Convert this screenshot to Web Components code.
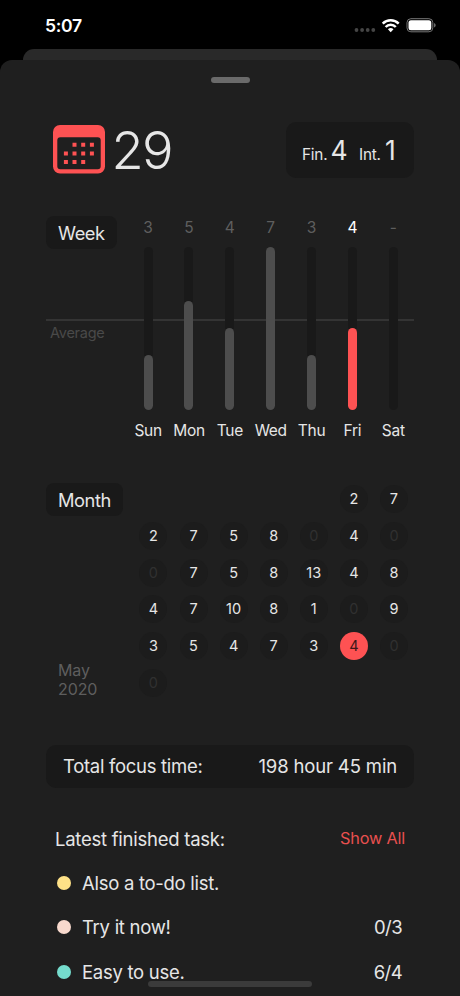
<!DOCTYPE html>
<html lang="en">
<head>
<meta charset="utf-8">
<title>Focus statistics</title>
<style>
	html, body {
		margin: 0;
		height: 996px;
		overflow: hidden;
		background: #000;
	}
	body {
		--accent: #fe5253;
		--sheet: #1f1f1f;
		--inset: #191919;
		--text: #e6e6e6;
		--dim: #5e5e5e;
		color: var(--text);
		font-family: Inter, "Liberation Sans", sans-serif;
	}
</style>
</head>
<body>
<stats-screen></stats-screen>
<script>
(function()  {
	function define(name, html, setup) {
		let template = document.createElement("template");
		template.innerHTML = html;
		customElements.define(name, class extends HTMLElement {
			constructor() {
				super();
				this._shadowRoot = this.attachShadow({mode: "open"});
				this._shadowRoot.appendChild(template.content.cloneNode(true));
			}

			connectedCallback() {
				if (setup && !this._ready) {
					this._ready = true;
					setup(this, this._shadowRoot);
				}
			}
		});
	}

	define("status-bar", `
		<style>
		:host {
			display: flex;
			height: 49px;
			box-sizing: border-box;
			padding: 14px 24px 0 45px;
			justify-content: space-between;
			color: #fff;
		}
		.time {
			font-size: 17.6px;
			line-height: 24px;
			font-weight: 600;
			letter-spacing: -0.35px;
		}
		svg {
			display: block;
			width: 84px;
			height: 24px;
		}
		</style>
		<span class="time"><slot></slot></span>
		<svg viewBox="352 14 84 24" fill="#fff">
			<g fill="#454545">
				<circle cx="356.5" cy="30" r="1.9"/>
				<circle cx="362.1" cy="30" r="1.9"/>
				<circle cx="367.7" cy="30" r="1.9"/>
				<circle cx="373.3" cy="30" r="1.9"/>
			</g>
			<g fill="none" stroke="#fff" stroke-width="2.5">
				<path d="M382.7 23.6a11.4 11.4 0 0 1 16 0"/>
				<path d="M385.6 27a7.1 7.1 0 0 1 10.2 0"/>
			</g>
			<path d="M390.7 32.2l-2.8-2.9a4 4 0 0 1 5.6 0z"/>
			<rect x="407" y="18.7" width="25.8" height="13.1" rx="3.9" fill="none" stroke="#777" stroke-width="1"/>
			<rect x="408.5" y="20.2" width="22.8" height="10.1" rx="2.5"/>
			<path d="M434.1 23.1c2 .8 2 3.5 0 4.3z" fill="#777"/>
		</svg>
	`);

	define("modal-sheet", `
		<style>
		:host {
			display: block;
		}
		.behind {
			height: 11px;
			margin: 0 23px;
			border-radius: 11px 11px 0 0;
			background: #292929;
		}
		.sheet {
			display: flex;
			flex-direction: column;
			height: 936px;
			box-sizing: border-box;
			padding: 17px 46px 0;
			border-radius: 12px 12px 0 0;
			background: var(--sheet);
		}
		.grabber {
			align-self: center;
			width: 39px;
			height: 5.5px;
			flex: none;
			border-radius: 3px;
			background: #6a6a6a;
		}
		</style>
		<div class="behind"></div>
		<div class="sheet">
			<div class="grabber"></div>
			<slot></slot>
		</div>
	`);

	define("calendar-icon", `
		<style>
		:host {
			display: block;
			width: 52px;
			height: 49px;
		}
		svg {
			display: block;
		}
		</style>
		<svg width="52" height="49" viewBox="0 0 52 49" fill="var(--accent)">
			<path fill-rule="evenodd" d="M7 0h38a7 7 0 0 1 7 7v34.5a7 7 0 0 1-7 7H7a7 7 0 0 1-7-7V7a7 7 0 0 1 7-7zM7.3 12.3a3 3 0 0 0-3 3v26a3 3 0 0 0 3 3h37.4a3 3 0 0 0 3-3v-26a3 3 0 0 0-3-3z"/>
			<path d="M19.5 17.7h4v4h-4zM28.2 17.7h4v4h-4zM36.9 17.7h4v4h-4zM10.9 26.4h4v4h-4zM19.5 26.4h4v4h-4zM28.2 26.4h4v4h-4zM36.9 26.4h4v4h-4zM10.9 35h4v4h-4zM19.5 35h4v4h-4zM28.2 35h4v4h-4z"/>
		</svg>
	`);

	define("day-header", `
		<style>
		:host {
			display: flex;
			justify-content: space-between;
			height: 56px;
		}
		.date {
			display: flex;
			align-items: flex-start;
			padding: 3px 0 0 7px;
		}
		.day {
			margin: -6px 0 0 6.5px;
			font-size: 52.5px;
			line-height: 62px;
			font-weight: 275;
			letter-spacing: -1.7px;
		}
		.totals {
			display: flex;
			align-items: baseline;
			width: 128px;
			box-sizing: border-box;
			padding: 10px 0 0 16px;
			border-radius: 10px;
			background: var(--inset);
			font-size: 15.3px;
			line-height: 36px;
			letter-spacing: -0.2px;
			white-space: pre;
		}
		b {
			font-size: 26.5px;
			font-weight: 400;
		}
		.fin { width: 28.5px; }
		.finished { width: 28.5px; }
		.int { width: 26px; }
		</style>
		<div class="date">
			<calendar-icon></calendar-icon>
			<span class="day"><slot name="day"></slot></span>
		</div>
		<div class="totals">
			<span class="fin">Fin.</span>
			<b class="finished"><slot name="finished"></slot></b>
			<span class="int">Int.</span>
			<b><slot name="interrupted"></slot></b>
		</div>
	`);

	define("section-chip", `
		<style>
		:host {
			display: block;
			width: max-content;
			height: 33px;
			padding: 0 12px;
			border-radius: 8px;
			background: var(--inset);
			font-size: 18.3px;
			line-height: 34px;
			letter-spacing: -0.45px;
		}
		</style>
		<slot></slot>
	`);

	define("week-bar", `
		<style>
		:host {
			display: flex;
			flex-direction: column;
			align-items: center;
			color: var(--text);
			font-size: 15.5px;
		}
		.count {
			height: 31px;
			line-height: 23px;
			color: var(--dim);
		}
		.track {
			display: flex;
			align-items: flex-end;
			width: 9px;
			height: 163px;
			border-radius: 4.5px;
			background: var(--inset);
		}
		.fill {
			width: 9px;
			border-radius: 4.5px;
			background: #4d4d4d;
		}
		.name {
			padding-top: 10px;
			line-height: 22px;
			letter-spacing: -0.3px;
		}
		:host([today]) .count { color: #fff; }
		:host([today]) .fill { background: var(--accent); }
		</style>
		<span class="count"></span>
		<div class="track"><div class="fill"></div></div>
		<span class="name"><slot></slot></span>
	`, function(host, root) {
		let count = Number(host.getAttribute("count"));
		let max = Number(host.getAttribute("max"));
		root.querySelector(".count").textContent = count || "-";
		// the scale starts at 1, not at 0
		root.querySelector(".fill").style.height = Math.max(0, (count - 1) / (max - 1)) * 100 + "%";
	});

	define("week-chart", `
		<style>
		:host {
			display: block;
			position: relative;
			height: 226px;
		}
		.average {
			position: absolute;
			top: 103px;
			left: 0;
			right: 0;
			border-top: 2px solid #343434;
			color: #494949;
			font-size: 14.5px;
			line-height: 18px;
			letter-spacing: -0.25px;
			padding: 3px 0 0 4px;
		}
		.row {
			position: relative;
			display: grid;
			grid-template-columns: 81.7px 1fr;
		}
		.bars {
			display: grid;
			grid-template-columns: repeat(7, 1fr);
			margin-right: 0.3px;
		}
		</style>
		<div class="average">Average</div>
		<div class="row">
			<section-chip>Week</section-chip>
			<div class="bars"></div>
		</div>
	`, function(host, root) {
		let days = ["Sun", "Mon", "Tue", "Wed", "Thu", "Fri", "Sat"];
		let counts = host.getAttribute("counts").split(",").map(Number);
		let max = Math.max(...counts);
		root.querySelector(".bars").innerHTML = days.map((day, i) =>
			`<week-bar count="${counts[i]}" max="${max}"${i == host.getAttribute("today") ? " today" : ""}>${day}</week-bar>`
		).join("");
	});

	define("month-grid", `
		<style>
		:host {
			display: grid;
			grid-template-columns: 87.4px 1fr;
			height: 221px;
		}
		.side {
			display: flex;
			flex-direction: column;
			justify-content: space-between;
		}
		section-chip {
			margin-top: -1px;
		}
		.label {
			padding: 0 0 5px 12px;
			width: 44px;
			color: var(--dim);
			font-size: 16px;
			line-height: 19.5px;
			letter-spacing: -0.1px;
		}
		.cells {
			display: grid;
			grid-template-columns: repeat(7, 1fr);
			grid-auto-rows: 36.7px;
			justify-items: center;
		}
		.cell {
			width: 28px;
			height: 28px;
			margin-top: 1.8px;
			border-radius: 50%;
			background: #1c1c1c;
			font-size: 14.5px;
			line-height: 28px;
			text-align: center;
		}
		.zero { color: #303030; }
		.today {
			background: var(--accent);
			color: #3f1718;
		}
		</style>
		<div class="side">
			<section-chip>Month</section-chip>
			<div class="label"><slot></slot></div>
		</div>
		<div class="cells"></div>
	`, function(host, root) {
		let cells = root.querySelector(".cells");
		host.getAttribute("counts").split(",").forEach((count, i) => {
			let cell = document.createElement("div");
			cell.className = "cell" + (count == 0 ? " zero" : "") + (i + 1 == host.getAttribute("today") ? " today" : "");
			cell.textContent = count;
			if (i == 0) {
				cell.style.gridColumnStart = host.getAttribute("start");
			}
			cells.appendChild(cell);
		});
	});

	define("focus-total", `
		<style>
		:host {
			display: flex;
			justify-content: space-between;
			height: 43px;
			padding: 0 17px;
			border-radius: 10px;
			background: var(--inset);
			font-size: 18.5px;
			line-height: 43px;
			letter-spacing: -0.3px;
		}
		.value {
			letter-spacing: -0.15px;
		}
		</style>
		<span>Total focus time:</span>
		<span class="value"><slot></slot></span>
	`);

	define("task-item", `
		<style>
		:host {
			display: flex;
			align-items: center;
			height: 44.4px;
			font-size: 18.5px;
			letter-spacing: -0.28px;
		}
		.dot {
			width: 14px;
			height: 14px;
			margin-right: 11px;
			border-radius: 50%;
		}
		.progress {
			margin-left: auto;
			letter-spacing: -0.6px;
		}
		</style>
		<span class="dot"></span>
		<span><slot></slot></span>
		<span class="progress"></span>
	`, function(host, root) {
		root.querySelector(".dot").style.background = host.getAttribute("color");
		root.querySelector(".progress").textContent = host.getAttribute("progress") || "";
	});

	define("task-list", `
		<style>
		:host {
			display: block;
			padding: 0 9px;
		}
		.head {
			display: flex;
			justify-content: space-between;
			height: 44.2px;
			font-size: 18.5px;
			line-height: 44px;
			letter-spacing: -0.25px;
		}
		.all {
			color: #e9504f;
			font-size: 16.3px;
			line-height: 43px;
			letter-spacing: -0.2px;
		}
		.items {
			padding: 0 3px 0 2px;
		}
		</style>
		<div class="head">
			<span>Latest finished task:</span>
			<span class="all">Show All</span>
		</div>
		<div class="items"><slot></slot></div>
	`);

	define("stats-screen", `
		<style>
		:host {
			display: block;
			position: relative;
			width: 460px;
			height: 996px;
			overflow: hidden;
		}
		day-header { margin-top: 39px; }
		week-chart { margin-top: 38px; }
		month-grid { margin-top: 42px; }
		focus-total { margin-top: 40px; }
		task-list { margin-top: 29px; }
		.home {
			position: absolute;
			left: 148px;
			bottom: 9px;
			width: 164px;
			height: 6px;
			border-radius: 3px;
			background: #3b3b3b;
		}
		</style>
		<status-bar>5:07</status-bar>
		<modal-sheet>
			<day-header>
				<span slot="day">29</span>
				<span slot="finished">4</span>
				<span slot="interrupted">1</span>
			</day-header>
			<week-chart counts="3,5,4,7,3,4,0" today="5"></week-chart>
			<month-grid start="6" today="29" counts="2,7,2,7,5,8,0,4,0,0,7,5,8,13,4,8,4,7,10,8,1,0,9,3,5,4,7,3,4,0,0">May 2020</month-grid>
			<focus-total>198 hour 45 min</focus-total>
			<task-list>
				<task-item color="#fee187">Also a to-do list.</task-item>
				<task-item color="#f8d9cd" progress="0/3">Try it now!</task-item>
				<task-item color="#75dccd" progress="6/4">Easy to use.</task-item>
			</task-list>
		</modal-sheet>
		<div class="home"></div>
	`);
})();
</script>
</body>
</html>
